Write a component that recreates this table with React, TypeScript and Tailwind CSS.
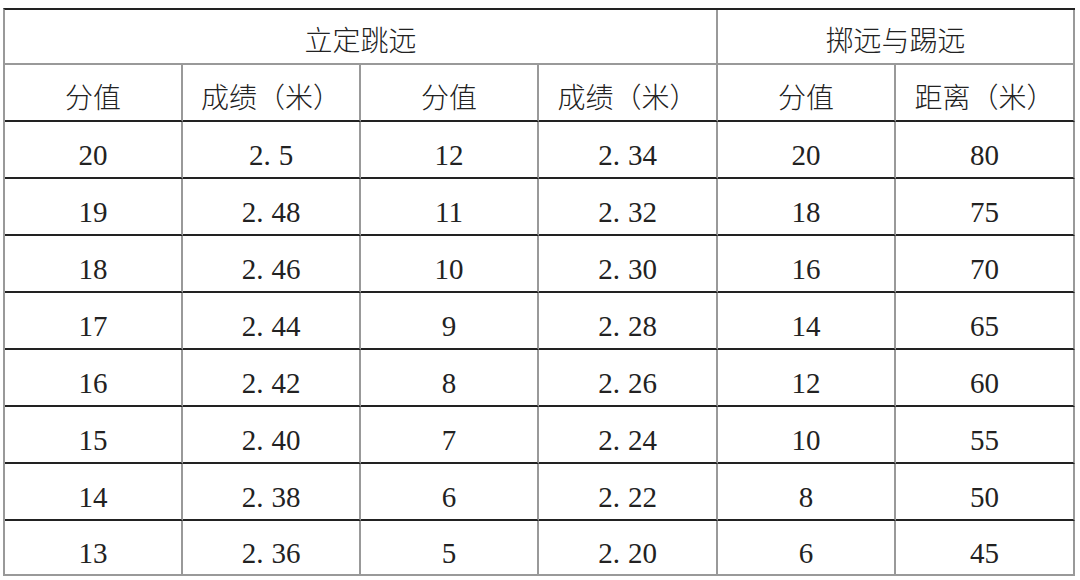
import React from "react";

const rows: [string, string, string, string, string, string][] = [
  ["20", "2.5", "12", "2.34", "20", "80"],
  ["19", "2.48", "11", "2.32", "18", "75"],
  ["18", "2.46", "10", "2.30", "16", "70"],
  ["17", "2.44", "9", "2.28", "14", "65"],
  ["16", "2.42", "8", "2.26", "12", "60"],
  ["15", "2.40", "7", "2.24", "10", "55"],
  ["14", "2.38", "6", "2.22", "8", "50"],
  ["13", "2.36", "5", "2.20", "6", "45"],
];

function Num({ v }: { v: string }) {
  const i = v.indexOf(".");
  if (i < 0) return <>{v}</>;
  return (
    <>
      {v.slice(0, i + 1)}
      <span className="ml-[8px]">{v.slice(i + 1)}</span>
    </>
  );
}

export default function App() {
  const font = { fontFamily: '"Liberation Serif", "Noto Sans CJK SC", serif' };
  return (
    <div className="w-[1080px] h-[580px] bg-white overflow-hidden pt-[8px] pl-[3px]" style={font}>
      <div className="grid w-[1072px] grid-cols-[178px_178px_178px_179px_178px_179px] border-t-2 border-l-2 border-t-[#222] border-l-[#999] text-[#222] text-[28px] leading-none">
        <div className="col-span-4 h-[55px] pt-[11px] flex items-center justify-center border-r-2 border-b-2 border-r-[#999] border-b-[#999] font-light">
          立定跳远
        </div>
        <div className="col-span-2 h-[55px] pt-[11px] flex items-center justify-center border-r-2 border-b-2 border-r-[#999] border-b-[#999] font-light">
          掷远与踢远
        </div>
        {["分值", "成绩（米）", "分值", "成绩（米）", "分值", "距离（米）"].map((t, i) => (
          <div
            key={i}
            className="h-[57px] pt-[12px] flex items-center justify-center border-r-2 border-b-2 border-r-[#999] border-b-[#222] font-light"
          >
            {t}
          </div>
        ))}
        {rows.map((r, ri) =>
          r.map((c, ci) => (
            <div
              key={ri + "-" + ci}
              className={
                "flex items-center justify-center pt-[11px] text-[29px] border-r-2 border-b-2 border-r-[#999] " +
                (ri === rows.length - 1 ? "h-[55px] border-b-[#999]" : "h-[57px] border-b-[#222]")
              }
            >
              <Num v={c} />
            </div>
          ))
        )}
      </div>
    </div>
  );
}
